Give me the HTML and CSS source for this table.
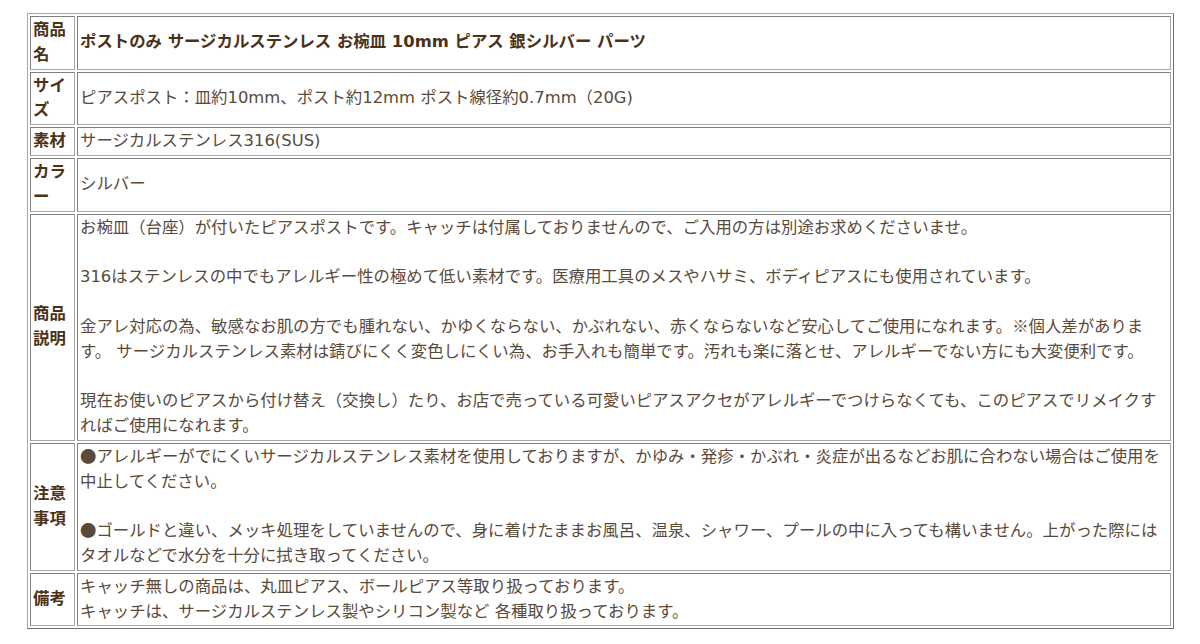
FILE: index.html
```html
<!DOCTYPE html>
<html lang="ja">
<head>
<meta charset="utf-8">
<title>商品詳細</title>
<link rel="stylesheet" href="styles.css">
</head>
<body>
<table class="spec">
  <tbody>
    <tr>
      <th class="label">商品名</th>
      <td class="value title">ポストのみ サージカルステンレス お椀皿 10mm ピアス 銀シルバー パーツ</td>
    </tr>
    <tr>
      <th class="label">サイズ</th>
      <td class="value">ピアスポスト：皿約10mm、ポスト約12mm ポスト線径約0.7mm（20G)</td>
    </tr>
    <tr>
      <th class="label">素材</th>
      <td class="value">サージカルステンレス316(SUS)</td>
    </tr>
    <tr>
      <th class="label">カラー</th>
      <td class="value">シルバー</td>
    </tr>
    <tr>
      <th class="label">商品説明</th>
      <td class="value">お椀皿（台座）が付いたピアスポストです。キャッチは付属しておりませんので、ご入用の方は別途お求めくださいませ。<br><br>316はステンレスの中でもアレルギー性の極めて低い素材です。医療用工具のメスやハサミ、ボディピアスにも使用されています。<br><br>金アレ対応の為、敏感なお肌の方でも腫れない、かゆくならない、かぶれない、赤くならないなど安心してご使用になれます。<span class="cjk">※個人差があります。</span> サージカルステンレス素材は錆びにくく変色しにくい為、お手入れも簡単です。汚れも楽に落とせ、アレルギーでない方にも大変便利です。<br><br>現在お使いのピアスから付け替え（交換し）たり、お店で売っている可愛いピアスアクセがアレルギーでつけらなくても、このピアスでリメイクすればご使用になれます。</td>
    </tr>
    <tr>
      <th class="label">注意事項</th>
      <td class="value"><span class="cjk">●アレルギーがでにくいサージカルステンレス素材を使用しておりますが、かゆみ・発疹・かぶれ・炎症が出るなどお肌に合わない場合はご使用を中止してください。</span><br><br><span class="cjk">●ゴールドと違い、メッキ処理をしていませんので、身に着けたままお風呂、温泉、シャワー、プールの中に入っても構いません。上がった際にはタオルなどで水分を十分に拭き取ってください。</span></td>
    </tr>
    <tr>
      <th class="label">備考</th>
      <td class="value">キャッチ無しの商品は、丸皿ピアス、ボールピアス等取り扱っております。<br>キャッチは、サージカルステンレス製やシリコン製など 各種取り扱っております。</td>
    </tr>
  </tbody>
</table>
</body>
</html>
```

FILE: styles.css
```css
html, body {
  margin: 0;
  padding: 0;
  background: #ffffff;
}

body {
  font-family: "DejaVu Sans", "Noto Sans CJK JP", sans-serif;
  font-size: 16.4px;
  line-height: 24.8px;
  color: #5a4a3a;
}

.cjk {
  font-family: "Noto Sans CJK JP", sans-serif;
  line-height: 1;
}

.spec {
  margin: 13px 0 0 27px;
  width: 1147px;
  table-layout: fixed;
  border-collapse: separate;
  border-spacing: 2px;
  border: 1px solid;
  border-color: #a8a8a8 #707070 #707070 #a8a8a8;
}

.spec th,
.spec td {
  padding: 1px 2px;
  border: 1px solid;
  border-color: #808080 #a8a8a8 #a8a8a8 #808080;
  vertical-align: middle;
  text-align: left;
}

.label {
  width: 39px;
  font-weight: bold;
  color: #4a3219;
  word-break: break-all;
}

.value {
  font-weight: normal;
}

.title {
  font-weight: bold;
  color: #4a3219;
}
```
